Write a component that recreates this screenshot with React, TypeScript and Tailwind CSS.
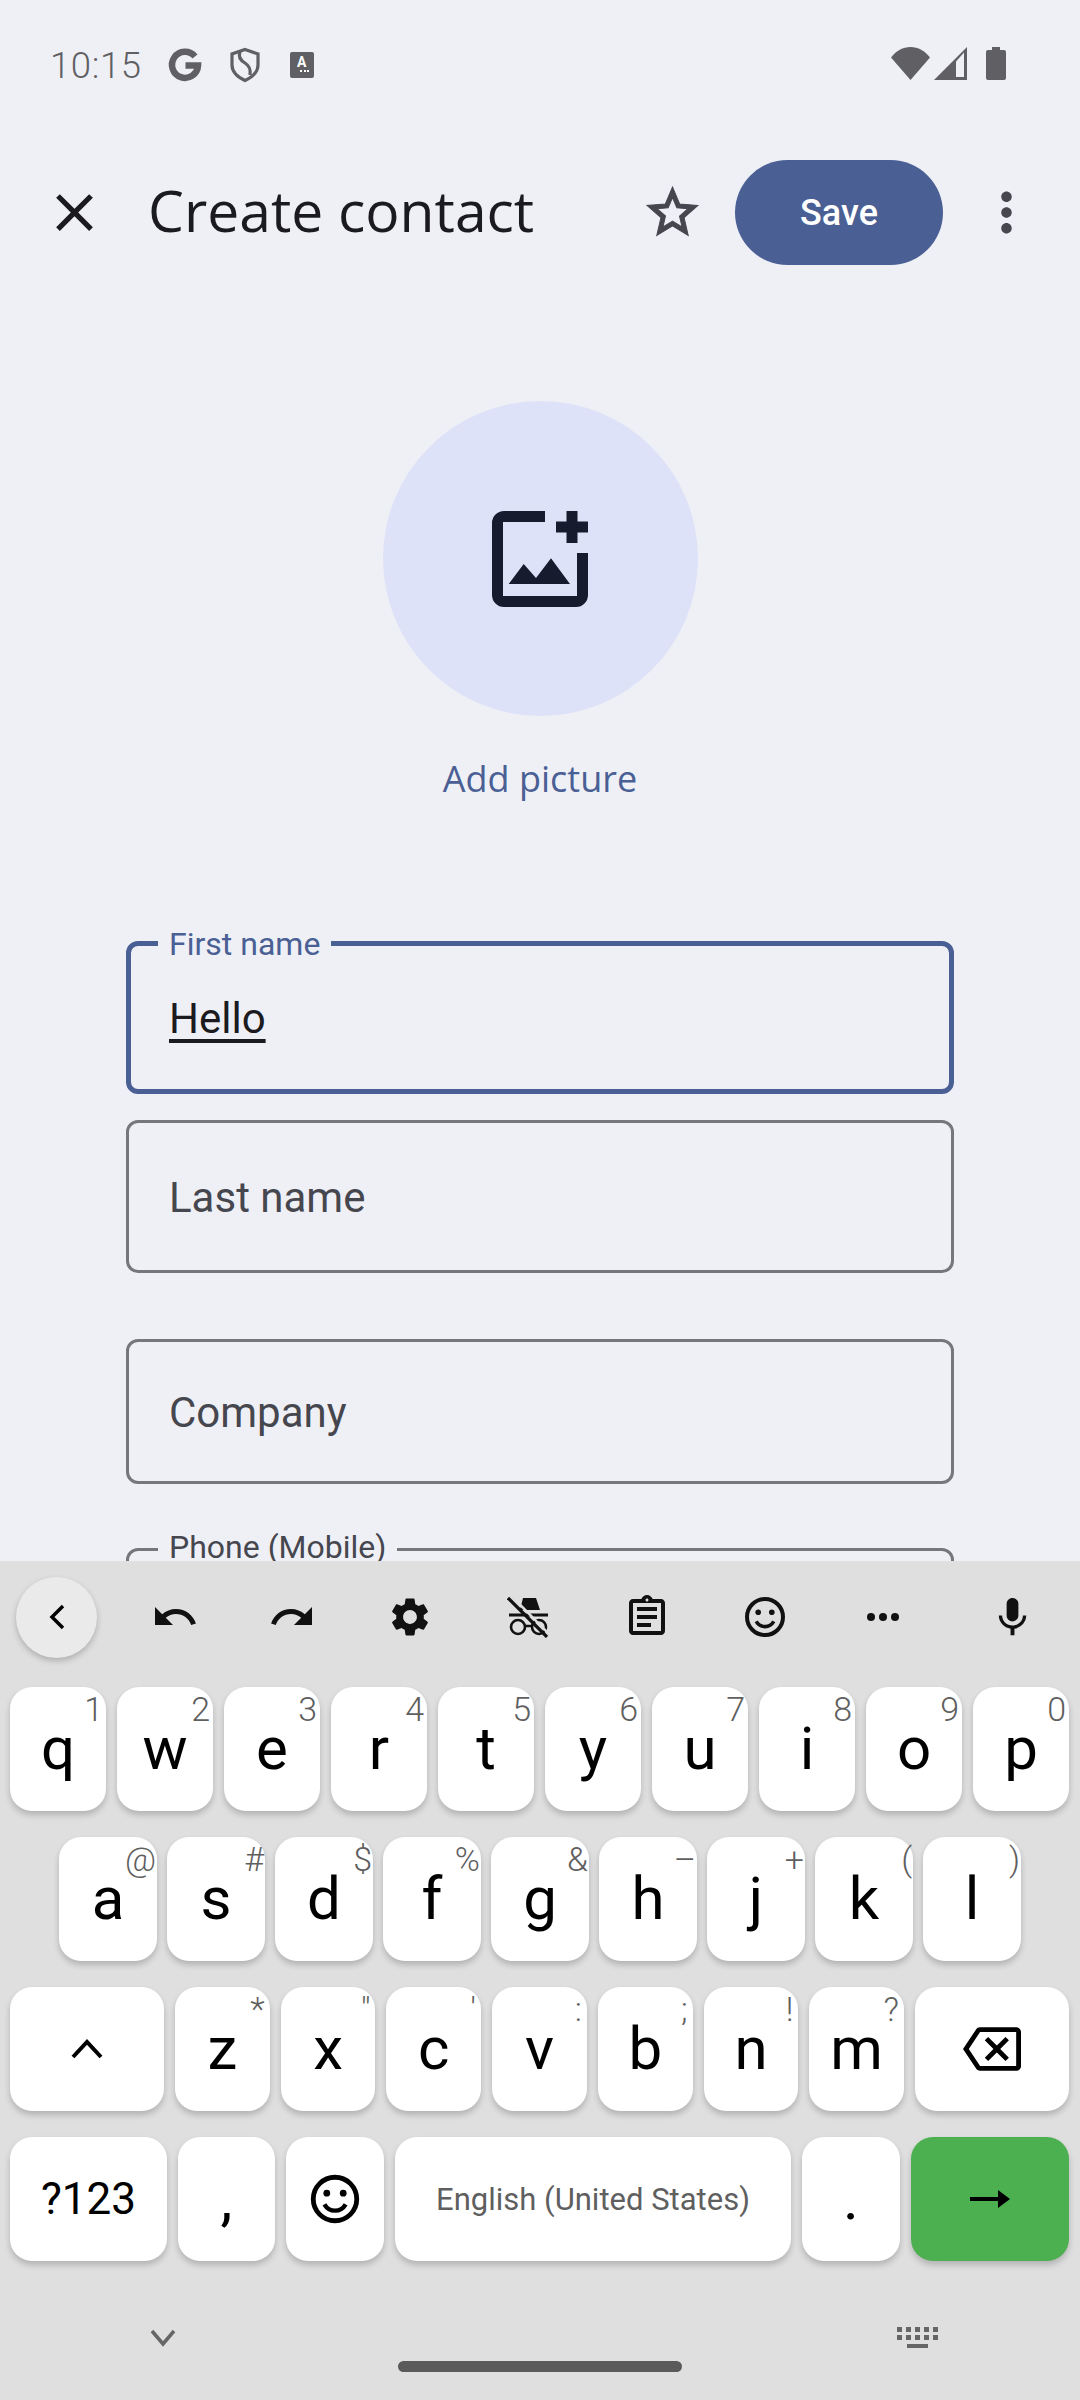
import type { ReactNode } from "react";

const row1 = [
  ["q", "1"], ["w", "2"], ["e", "3"], ["r", "4"], ["t", "5"],
  ["y", "6"], ["u", "7"], ["i", "8"], ["o", "9"], ["p", "0"],
];
const row2 = [
  ["a", "@"], ["s", "#"], ["d", "$"], ["f", "%"], ["g", "&"],
  ["h", "–"], ["j", "+"], ["k", "("], ["l", ")"],
];
const row3 = [
  ["z", "*"], ["x", '"'], ["c", "'"], ["v", ":"], ["b", ";"], ["n", "!"], ["m", "?"],
];

function Icon({ d, size, className }: { d: string; size: number; className?: string }) {
  return (
    <svg width={size} height={size} viewBox="0 0 24 24" fill="currentColor" className={className}>
      <path d={d} />
    </svg>
  );
}

function Smile({ size }: { size: number }) {
  return (
    <svg width={size} height={size} viewBox="0 0 24 24" fill="none" stroke="currentColor">
      <circle cx="12" cy="12" r="9" strokeWidth="2" />
      <circle cx="8.6" cy="9.6" r="1.4" fill="currentColor" stroke="none" />
      <circle cx="15.4" cy="9.6" r="1.4" fill="currentColor" stroke="none" />
      <path d="M7.6 14.2c1 1.7 2.6 2.6 4.4 2.6s3.4-.9 4.4-2.6" strokeWidth="1.8" />
    </svg>
  );
}

function StatusBar() {
  return (
    <div className="h-[160px] flex items-start pt-[47px] pl-[50px] text-[#5f5f64] shrink-0">
      <span className="text-[36.5px] leading-[35px] mt-[1px] font-light tracking-[0.6px]">10:15</span>
      {/* G */}
      <svg width="36" height="36" viewBox="0 0 36 36" className="ml-[25px]" fill="none" stroke="currentColor">
        <path d="M28 9.5A13 13 0 1 0 31 18.500H18.500" strokeWidth="6.500" />
      </svg>
      {/* shield */}
      <svg width="34" height="36" viewBox="0 0 32 36" className="ml-[25px]" fill="none" stroke="currentColor" strokeWidth="3.200">
        <path d="M16 2.500 29 7v11c0 7-5.500 12-13 15.500C8.500 30 3 25 3 18V7z" />
        <path d="M11 5c-2 5 0 8 5 11 4 2.500 6 6 5 12" />
      </svg>
      <div className="ml-[28px] mt-[5px] w-[24px] h-[26px] rounded-[2px] bg-[#5f5f64] flex flex-col items-center text-white">
        <span className="text-[14px] leading-[18px] font-bold mt-[1px]">A</span>
        <div className="flex gap-[1.500px] mt-[-1px] ml-[6px]">
          <div className="w-[2px] h-[2px] bg-white" />
          <div className="w-[2px] h-[2px] bg-white" />
          <div className="w-[2px] h-[2px] bg-white" />
        </div>
      </div>
      <div className="ml-auto flex items-start pr-[74px]">
        <svg width="39" height="33" viewBox="0 0 39 33" fill="currentColor">
          <path d="M0 10.500C5 4 12 0 19.500 0S34 4 39 10.500L19.500 33z" />
        </svg>
        <svg width="33" height="33" viewBox="0 0 33 33" className="ml-[4px]">
          <path d="M33 0v33H0z" fill="currentColor" />
          <path d="M22 14.500 30 5.500V30H22z" fill="#eff0f6" />
        </svg>
        <svg width="20" height="33" viewBox="0 0 20 33" className="ml-[19px]" fill="currentColor">
          <path d="M6 0h8v3h4a2 2 0 0 1 2 2v26a2 2 0 0 1-2 2H2a2 2 0 0 1-2-2V5a2 2 0 0 1 2-2h4z" />
        </svg>
      </div>
    </div>
  );
}

function TopBar() {
  return (
    <div className="h-[105px] flex items-center pl-[43px] pr-[42px] shrink-0">
      <Icon
        size={63}
        className="text-[#1b1b1f]"
        d="M19 6.410 17.590 5 12 10.590 6.410 5 5 6.410 10.590 12 5 17.590 6.410 19 12 13.410 17.590 19 19 17.590 13.410 12z"
      />
      <h1 className="ml-[42px] flex-1 text-[57px] leading-[60px] text-[#1b1b1f] font-['Open_Sans',sans-serif] mt-[-5px]">
        Create contact
      </h1>
      <Icon
        size={61}
        className="text-[#47464f] mr-[32px] stroke-current stroke-[0.4]"
        d="M22 9.240l-7.190-.620L12 2 9.190 8.630 2 9.240l5.460 4.730L5.820 21 12 17.270 18.180 21l-1.630-7.030L22 9.240zM12 15.400l-3.760 2.270 1-4.280-3.320-2.880 4.380-.380L12 6.100l1.710 4.040 4.380.380-3.320 2.880 1 4.280L12 15.400z"
      />
      <button className="w-[208px] h-[105px] rounded-full bg-[#4a5f94] text-white text-[36px] font-medium">
        Save
      </button>
      <Icon
        size={63}
        className="text-[#47464f] ml-[32px]"
        d="M12 8c1.100 0 2-.900 2-2s-.900-2-2-2-2 .900-2 2 .900 2 2 2zm0 2c-1.100 0-2 .900-2 2s.900 2 2 2 2-.900 2-2-.900-2-2-2zm0 6c-1.100 0-2 .900-2 2s.900 2 2 2 2-.900 2-2-.900-2-2-2z"
      />
    </div>
  );
}

function Field({
  label,
  value,
  placeholder,
  focused,
  height,
  className,
}: {
  label?: string;
  value?: string;
  placeholder?: string;
  focused?: boolean;
  height: number;
  className?: string;
}) {
  return (
    <div
      className={`relative w-[828px] shrink-0 rounded-[12px] flex items-center ${
        focused ? "border-[5px] border-[#4a5f94] pl-[38px]" : "border-[3px] border-[#77767c] pl-[40px]"
      } ${className ?? ""}`}
      style={{ height }}
    >
      {label && (
        <span
          className={`absolute bg-[#eff0f6] px-[11px] text-[32px] leading-[32px] whitespace-nowrap ${
            focused ? "text-[#4a5f94] left-[27px] top-[-18px]" : "text-[#46464f] left-[29px] top-[-20px]"
          }`}
        >
          {label}
        </span>
      )}
      {value && (
        <span className="text-[42px] leading-[48px] text-[#1b1b1f] underline decoration-[4px] underline-offset-[6px] mt-[3px]">
          {value}
        </span>
      )}
      {placeholder && <span className="text-[42px] leading-[48px] text-[#46464f] mt-[2px]">{placeholder}</span>}
    </div>
  );
}

function Key({
  hint,
  children,
  className,
  hintClass,
}: {
  hint?: string;
  children: ReactNode;
  className?: string;
  hintClass?: string;
}) {
  return (
    <div
      className={`relative h-[124px] rounded-[22px] bg-white shadow-[0_4px_6px_rgba(0,0,0,0.2)] flex items-center justify-center text-black text-[60px] leading-none ${
        className ?? ""
      }`}
    >
      {children}
      {hint && (
        <span className={`absolute top-[5px] text-[34px] leading-[34px] font-light text-[#5f5f5f] ${hintClass ?? "right-[3px]"}`}>
          {hint}
        </span>
      )}
    </div>
  );
}

function SuggestionBar() {
  return (
    <div className="h-[126px] flex items-center text-[#111] shrink-0 pl-[16px] pb-[14px]">
      <div className="w-[81px] h-[81px] rounded-full bg-[#eaeaea] shadow-[0_3px_6px_rgba(0,0,0,0.22)] flex items-center justify-center shrink-0">
        <svg width="24" height="28" viewBox="0 0 24 28" fill="none" stroke="#000" strokeWidth="3.500">
          <path d="M18 3 7 14l11 11" />
        </svg>
      </div>
      <Icon
        size={48}
        className="ml-[54px]"
        d="M12.500 8c-2.650 0-5.050.990-6.900 2.600L2 7v9h9l-3.620-3.620c1.390-1.160 3.160-1.880 5.120-1.880 3.540 0 6.550 2.310 7.600 5.500l2.370-.780C21.080 11.030 17.150 8 12.500 8z"
      />
      <Icon
        size={48}
        className="ml-[69px]"
        d="M18.400 10.600C16.550 8.990 14.150 8 11.500 8c-4.650 0-8.580 3.030-9.960 7.220L3.900 16c1.050-3.190 4.050-5.500 7.600-5.500 1.950 0 3.730.720 5.120 1.880L13 16h9V7l-3.600 3.600z"
      />
      <Icon
        size={46}
        className="ml-[71px]"
        d="M19.140 12.940c.040-.300.060-.610.060-.940 0-.320-.020-.640-.070-.940l2.030-1.580c.180-.140.230-.410.120-.610l-1.920-3.320c-.120-.220-.370-.290-.590-.220l-2.390.960c-.500-.380-1.030-.700-1.620-.940l-.360-2.540c-.040-.240-.240-.410-.480-.410h-3.840c-.240 0-.430.170-.470.410l-.360 2.540c-.590.240-1.130.570-1.620.940l-2.390-.960c-.220-.080-.470 0-.590.220L2.740 8.870c-.120.210-.080.470.120.610l2.030 1.580c-.050.300-.090.630-.090.940s.020.640.070.940l-2.030 1.580c-.180.140-.230.410-.120.610l1.920 3.320c.120.220.370.290.590.220l2.390-.960c.500.380 1.030.700 1.620.940l.360 2.540c.050.240.240.410.480.410h3.840c.240 0 .440-.170.470-.410l.360-2.540c.590-.240 1.130-.560 1.620-.940l2.390.960c.220.080.470 0 .590-.220l1.920-3.320c.120-.220.070-.470-.120-.610l-2.010-1.580zM12 15.600c-1.980 0-3.600-1.620-3.600-3.600s1.620-3.600 3.600-3.600 3.600 1.620 3.600 3.600-1.620 3.600-3.600 3.600z"
      />
      {/* incognito off */}
      <svg width="42" height="42" viewBox="0 0 42 42" className="ml-[74px]" fill="none" stroke="currentColor">
        <path d="M16 2 L29 2 L33 14 L13 14z" fill="currentColor" stroke="none" />
        <path d="M2 19h39" strokeWidth="3" />
        <circle cx="11" cy="31" r="7" strokeWidth="2.600" />
        <circle cx="32" cy="31" r="7" strokeWidth="2.600" />
        <path d="M18 30h7" strokeWidth="2.500" />
        <path d="M4.500 0 43 39" stroke="#dfdfdf" strokeWidth="2.500" />
        <path d="M1 2l39 39" strokeWidth="3.200" />
      </svg>
      <svg width="48" height="48" viewBox="0 0 24 24" className="ml-[74px]" fill="currentColor">
        <path d="M7 15h7v2H7zm0-4h10v2H7zm0-4h10v2H7z" />
        <path d="M19 3h-4.180C14.400 1.840 13.300 1 12 1s-2.400.840-2.820 2H5c-1.100 0-2 .900-2 2v14c0 1.100.900 2 2 2h14c1.100 0 2-.900 2-2V5c0-1.100-.900-2-2-2zm-7-.250c.410 0 .750.340.750.750s-.340.750-.750.750-.750-.340-.750-.750.340-.750.750-.750zM19 19H5V5h14v14z" />
      </svg>
      <div className="ml-[70px]">
        <Smile size={48} />
      </div>
      <div className="ml-[78px] flex gap-[4px]">
        <div className="w-[8px] h-[8px] rounded-full bg-current" />
        <div className="w-[8px] h-[8px] rounded-full bg-current" />
        <div className="w-[8px] h-[8px] rounded-full bg-current" />
      </div>
      <Icon
        size={47}
        className="ml-[90px]"
        d="M12 14c1.660 0 3-1.340 3-3V5c0-1.660-1.340-3-3-3S9 3.340 9 5v6c0 1.660 1.340 3 3 3zm5.300-3c0 3-2.540 5.100-5.300 5.100S6.700 14 6.700 11H5c0 3.410 2.720 6.230 6 6.720V21h2v-3.280c3.280-.480 6-3.300 6-6.720h-1.700z"
      />
    </div>
  );
}

function Keyboard() {
  return (
    <div className="h-[839px] bg-[#dfdfdf] shrink-0 flex flex-col font-['Roboto',sans-serif]">
      <SuggestionBar />
      <div className="flex gap-[11px] pl-[10px] pr-[11px]">
        {row1.map(([k, h]) => (
          <Key key={k} hint={h} className="flex-1">
            {k}
          </Key>
        ))}
      </div>
      <div className="flex gap-[10px] pl-[59px] pr-[59px] mt-[26px]">
        {row2.map(([k, h]) => (
          <Key key={k} hint={h} className="flex-1" hintClass="right-[1px]">
            {k}
          </Key>
        ))}
      </div>
      <div className="flex gap-[11px] pl-[10px] pr-[11px] mt-[26px]">
        <Key className="w-[154px] shrink-0">
          <svg width="34" height="22" viewBox="0 0 34 22" fill="none" stroke="#000" strokeWidth="4">
            <path d="M3 19 17 4l14 15" />
          </svg>
        </Key>
        {row3.map(([k, h]) => (
          <Key key={k} hint={h} className="flex-1" hintClass="right-[5px]">
            {k}
          </Key>
        ))}
        <Key className="w-[154px] shrink-0">
          <Icon
            size={58}
            d="M22 3H7c-.690 0-1.230.350-1.590.880L0 12l5.410 8.110c.360.530.900.890 1.590.890h15c1.100 0 2-.900 2-2V5c0-1.100-.900-2-2-2zm0 16H7.070L2.400 12l4.660-7H22v14zm-11.590-2L14 13.410 17.590 17 19 15.590 15.410 12 19 8.410 17.590 7 14 10.590 10.410 7 9 8.410 12.590 12 9 15.590z"
          />
        </Key>
      </div>
      <div className="flex gap-[11px] pl-[10px] pr-[11px] mt-[26px]">
        <Key className="w-[157px] shrink-0 !text-[44px]">?123</Key>
        <Key className="w-[97px] shrink-0">,</Key>
        <Key className="w-[98px] shrink-0">
          <Smile size={58} />
        </Key>
        <Key className="flex-1 !text-[31px] !text-[#5f5f5f]">English (United States)</Key>
        <Key className="w-[98px] shrink-0">.</Key>
        <Key className="w-[158px] shrink-0 !bg-[#4caf50]">
          <svg width="40" height="20" viewBox="0 0 40 20" fill="#000">
            <path d="M0 8h28V1l12 9-12 9v-7H0z" />
          </svg>
        </Key>
      </div>
      <div className="flex items-start mt-[64px] pl-[150px] pr-[142px] text-[#666]">
        <svg width="26" height="18" viewBox="0 0 26 18" fill="none" stroke="currentColor" strokeWidth="3.500" className="mt-[4px]">
          <path d="M2 2l11 13L24 2" />
        </svg>
        <div className="ml-auto flex flex-col gap-[3px] w-[41px] mt-[2px]">
          <div className="h-[5px] bg-[repeating-linear-gradient(90deg,#666_0_5px,transparent_5px_9px)]" />
          <div className="h-[5px] bg-[repeating-linear-gradient(90deg,#666_0_5px,transparent_5px_9px)]" />
          <div className="h-[4px] w-[21px] mx-auto mt-[1px] bg-[#666]" />
        </div>
      </div>
      <div className="w-[284px] h-[11px] rounded-full bg-[#5a5a5a] mx-auto mt-[13px]" />
    </div>
  );
}

export default function App() {
  return (
    <div className="w-[1080px] h-[2400px] flex flex-col overflow-hidden bg-[#eff0f6] font-['Roboto',sans-serif]">
      <div className="h-[1561px] shrink-0 overflow-hidden flex flex-col">
        <StatusBar />
        <TopBar />
        <div className="flex flex-col items-center">
          <div className="w-[315px] h-[315px] rounded-full bg-[#dde2f8] mt-[136px] flex items-center justify-center">
            <svg width="96" height="96" viewBox="0 0 96 96" fill="#161c2e" className="mt-[1px]">
              <path d="M0 12a12 12 0 0 1 12-12H53V11H11V85H85V42H96V84a12 12 0 0 1-12 12H12a12 12 0 0 1-12-12z" />
              <path d="M74.500 0h11v10.500H96v11H85.500V32h-11V21.500H64v-11h10.500z" />
              <path d="M16.700 73 31.700 53 44 67 59 47.300 78 73z" />
            </svg>
          </div>
          <p className="mt-[39px] text-[36px] leading-[48px] font-medium text-[#4a5f94] font-['Open_Sans',sans-serif]">Add picture</p>
          <Field label="First name" value="Hello" focused height={153} className="mt-[138px]" />
          <Field placeholder="Last name" height={153} className="mt-[26px]" />
          <Field placeholder="Company" height={145} className="mt-[66px]" />
          <Field label="Phone (Mobile)" height={153} className="mt-[64px]" />
        </div>
      </div>
      <Keyboard />
    </div>
  );
}
